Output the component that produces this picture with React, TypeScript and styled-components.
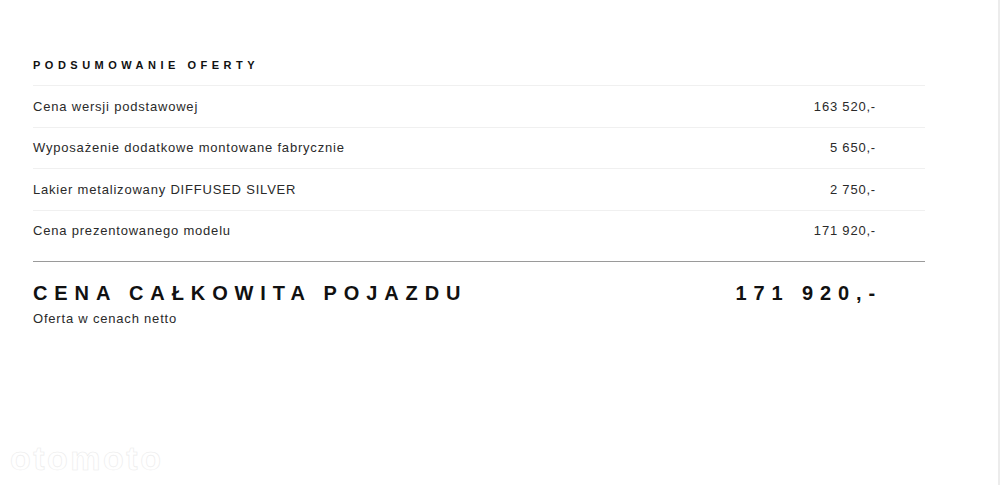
import styled, { createGlobalStyle } from "styled-components";

const GlobalStyle = createGlobalStyle`
  html, body {
    margin: 0;
    padding: 0;
    background: #ffffff;
  }
  body {
    font-family: "Liberation Sans", Arial, sans-serif;
    color: #2a2a2a;
  }
`;

type PriceItem = {
  label: string;
  value: string;
};

const items: PriceItem[] = [
  { label: "Cena wersji podstawowej", value: "163 520,-" },
  { label: "Wyposażenie dodatkowe montowane fabrycznie", value: "5 650,-" },
  { label: "Lakier metalizowany DIFFUSED SILVER", value: "2 750,-" },
  { label: "Cena prezentowanego modelu", value: "171 920,-" },
];

const Page = styled.div`
  position: relative;
  box-sizing: border-box;
  width: 1000px;
  height: 485px;
  border-right: 2px solid #ececec;
  overflow: hidden;
`;

const Summary = styled.section`
  width: 892px;
  padding: 58px 0 0 33px;
`;

const Heading = styled.h2`
  margin: 0;
  padding-bottom: 13px;
  font-size: 11px;
  line-height: 14px;
  font-weight: bold;
  letter-spacing: 4.5px;
  color: #111111;
  text-transform: uppercase;
`;

const List = styled.ul`
  list-style: none;
  margin: 0;
  padding: 0;
`;

const Row = styled.li`
  display: flex;
  align-items: center;
  justify-content: space-between;
  height: 41.5px;
  box-sizing: border-box;
  border-top: 1px solid #f0f0f0;
  padding-right: 49px;
  font-size: 13px;
  letter-spacing: 0.8px;
  color: #2a2a2a;
`;

const Label = styled.span``;

const Value = styled.span`
  text-align: right;
`;

const Total = styled.div`
  margin-top: 10px;
  border-top: 1px solid #9a9a9a;
  padding-top: 19px;
`;

const TotalLine = styled.div`
  display: flex;
  justify-content: space-between;
  align-items: center;
  padding-right: 43px;
  font-size: 20px;
  line-height: 24px;
  font-weight: bold;
  letter-spacing: 6.9px;
  color: #111111;
`;

const Note = styled.p`
  margin: 6px 0 0;
  font-size: 13px;
  line-height: 16px;
  letter-spacing: 0.8px;
  color: #2a2a2a;
`;

const Watermark = styled.div`
  position: absolute;
  left: 10px;
  bottom: 7px;
  font-family: "Liberation Sans", Arial, sans-serif;
  font-size: 34px;
  font-weight: bold;
  letter-spacing: 2.5px;
  color: #ffffff;
  -webkit-text-stroke: 0.6px #ebebeb;
  user-select: none;
`;

export default function App() {
  return (
    <>
      <GlobalStyle />
      <Page>
        <Summary>
          <Heading>Podsumowanie oferty</Heading>
          <List>
            {items.map((item) => (
              <Row key={item.label}>
                <Label>{item.label}</Label>
                <Value>{item.value}</Value>
              </Row>
            ))}
          </List>
          <Total>
            <TotalLine>
              <span>CENA CAŁKOWITA POJAZDU</span>
              <span>171 920,-</span>
            </TotalLine>
            <Note>Oferta w cenach netto</Note>
          </Total>
        </Summary>
        <Watermark>otomoto</Watermark>
      </Page>
    </>
  );
}
